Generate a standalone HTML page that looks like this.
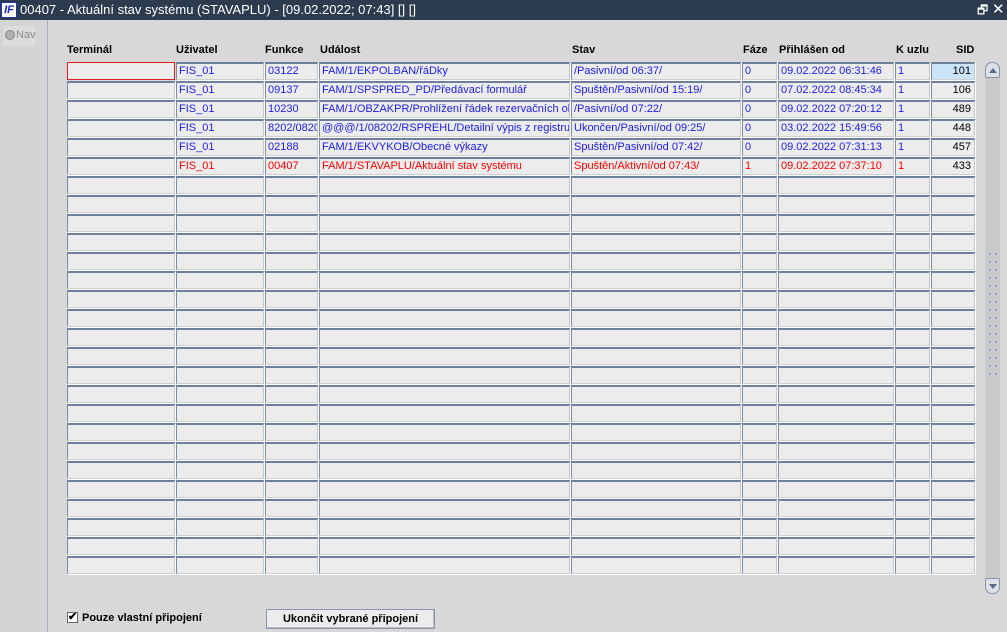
<!DOCTYPE html>
<html><head><meta charset="utf-8"><style>
*{box-sizing:border-box;margin:0;padding:0}
body{width:1007px;height:632px;overflow:hidden;background:#d8d8d8;font-family:"Liberation Sans",sans-serif;font-size:11px;position:relative}
.tb{position:absolute;left:0;top:0;width:1007px;height:20px;background:#2d3b4f;color:#fff;font-size:13px;line-height:20px}
.logo{position:absolute;left:1px;top:2px;width:16px;height:16px;background:#fff;border:1px solid #2233aa;color:#1122cc;font:bold italic 11px "Liberation Sans",sans-serif;line-height:14px;text-align:center}
.nav{position:absolute;left:0;top:20px;width:48px;height:612px;background:#d4d4d4;border-right:1px solid #a8b0bc}
.navb{position:absolute;left:3px;top:6px;width:32px;height:20px;background:#dcdcdc;color:#8a8a8a;font-size:11px;line-height:18px;padding-left:13px}
.navb:before{content:"";position:absolute;left:2px;top:4px;width:8px;height:8px;border-radius:50%;background:#b0b0b0;border:1px solid #888}
.h{position:absolute;top:44px;font-weight:bold;font-size:11px}
.grid{position:absolute;left:67px;top:62px}
.r{display:flex;height:19px}
.c{height:18px;margin-right:1px;background:#ececec;border:1px solid #7d8ba3;border-top:2px solid #6d7f9c;border-right-color:#c4c8cc;border-bottom-color:#d0d0d0;box-shadow:1px 1px 0 #fff;color:#1c1ce8;line-height:15px;padding-left:2px;white-space:nowrap;overflow:hidden}
.w1{width:108px}.w2{width:88px}.w3{width:53px}.w4{width:251px}.w5{width:170px}.w6{width:35px}.w7{width:116px}.w8{width:35px}.w9{width:44px;margin-right:0;text-align:right;padding-right:3px;color:#000}
.red .c{color:#f00}.red .w9{color:#000}
.sel{border:1px solid #e02020!important;box-shadow:none!important}
.sb{position:absolute;left:985px;top:62px;width:15px;height:532px;background:#cacaca;border-radius:7px}
</style></head><body>
<div class="tb"><div class="logo">IF</div><span style="position:absolute;left:20px">00407 - Aktuální stav systému (STAVAPLU) - [09.02.2022; 07:43] [] []</span><span style="position:absolute;left:977px;top:0;font-size:12px">🗗</span><span style="position:absolute;left:992px;font-size:15px">✕</span></div>
<div class="nav"><div class="navb">Nav</div></div>
<div class="h" style="left:67px">Terminál</div>
<div class="h" style="left:176px">Uživatel</div>
<div class="h" style="left:265px">Funkce</div>
<div class="h" style="left:320px">Událost</div>
<div class="h" style="left:572px">Stav</div>
<div class="h" style="left:743px">Fáze</div>
<div class="h" style="left:779px">Přihlášen od</div>
<div class="h" style="left:896px">K uzlu</div>
<div class="h" style="left:956px">SID</div>
<div class="grid">
<div class="r"><div class="c w1 sel"></div><div class="c w2">FIS_01</div><div class="c w3">03122</div><div class="c w4">FAM/1/EKPOLBAN/řáDky</div><div class="c w5">/Pasivní/od 06:37/</div><div class="c w6">0</div><div class="c w7">09.02.2022 06:31:46</div><div class="c w8">1</div><div class="c w9" style="background:#cce4fa">101</div></div>
<div class="r"><div class="c w1"></div><div class="c w2">FIS_01</div><div class="c w3">09137</div><div class="c w4">FAM/1/SPSPRED_PD/Předávací formulář</div><div class="c w5">Spuštěn/Pasivní/od 15:19/</div><div class="c w6">0</div><div class="c w7">07.02.2022 08:45:34</div><div class="c w8">1</div><div class="c w9">106</div></div>
<div class="r"><div class="c w1"></div><div class="c w2">FIS_01</div><div class="c w3">10230</div><div class="c w4">FAM/1/OBZAKPR/Prohlížení řádek rezervačních obj</div><div class="c w5">/Pasivní/od 07:22/</div><div class="c w6">0</div><div class="c w7">09.02.2022 07:20:12</div><div class="c w8">1</div><div class="c w9">489</div></div>
<div class="r"><div class="c w1"></div><div class="c w2">FIS_01</div><div class="c w3">8202/0820</div><div class="c w4">@@@/1/08202/RSPREHL/Detailní výpis z registru s</div><div class="c w5">Ukončen/Pasivní/od 09:25/</div><div class="c w6">0</div><div class="c w7">03.02.2022 15:49:56</div><div class="c w8">1</div><div class="c w9">448</div></div>
<div class="r"><div class="c w1"></div><div class="c w2">FIS_01</div><div class="c w3">02188</div><div class="c w4">FAM/1/EKVYKOB/Obecné výkazy</div><div class="c w5">Spuštěn/Pasivní/od 07:42/</div><div class="c w6">0</div><div class="c w7">09.02.2022 07:31:13</div><div class="c w8">1</div><div class="c w9">457</div></div>
<div class="r red"><div class="c w1"></div><div class="c w2">FIS_01</div><div class="c w3">00407</div><div class="c w4">FAM/1/STAVAPLU/Aktuální stav systému</div><div class="c w5">Spuštěn/Aktivní/od 07:43/</div><div class="c w6">1</div><div class="c w7">09.02.2022 07:37:10</div><div class="c w8">1</div><div class="c w9">433</div></div>
<div class="r"><div class="c w1"></div><div class="c w2"></div><div class="c w3"></div><div class="c w4"></div><div class="c w5"></div><div class="c w6"></div><div class="c w7"></div><div class="c w8"></div><div class="c w9"></div></div>
<div class="r"><div class="c w1"></div><div class="c w2"></div><div class="c w3"></div><div class="c w4"></div><div class="c w5"></div><div class="c w6"></div><div class="c w7"></div><div class="c w8"></div><div class="c w9"></div></div>
<div class="r"><div class="c w1"></div><div class="c w2"></div><div class="c w3"></div><div class="c w4"></div><div class="c w5"></div><div class="c w6"></div><div class="c w7"></div><div class="c w8"></div><div class="c w9"></div></div>
<div class="r"><div class="c w1"></div><div class="c w2"></div><div class="c w3"></div><div class="c w4"></div><div class="c w5"></div><div class="c w6"></div><div class="c w7"></div><div class="c w8"></div><div class="c w9"></div></div>
<div class="r"><div class="c w1"></div><div class="c w2"></div><div class="c w3"></div><div class="c w4"></div><div class="c w5"></div><div class="c w6"></div><div class="c w7"></div><div class="c w8"></div><div class="c w9"></div></div>
<div class="r"><div class="c w1"></div><div class="c w2"></div><div class="c w3"></div><div class="c w4"></div><div class="c w5"></div><div class="c w6"></div><div class="c w7"></div><div class="c w8"></div><div class="c w9"></div></div>
<div class="r"><div class="c w1"></div><div class="c w2"></div><div class="c w3"></div><div class="c w4"></div><div class="c w5"></div><div class="c w6"></div><div class="c w7"></div><div class="c w8"></div><div class="c w9"></div></div>
<div class="r"><div class="c w1"></div><div class="c w2"></div><div class="c w3"></div><div class="c w4"></div><div class="c w5"></div><div class="c w6"></div><div class="c w7"></div><div class="c w8"></div><div class="c w9"></div></div>
<div class="r"><div class="c w1"></div><div class="c w2"></div><div class="c w3"></div><div class="c w4"></div><div class="c w5"></div><div class="c w6"></div><div class="c w7"></div><div class="c w8"></div><div class="c w9"></div></div>
<div class="r"><div class="c w1"></div><div class="c w2"></div><div class="c w3"></div><div class="c w4"></div><div class="c w5"></div><div class="c w6"></div><div class="c w7"></div><div class="c w8"></div><div class="c w9"></div></div>
<div class="r"><div class="c w1"></div><div class="c w2"></div><div class="c w3"></div><div class="c w4"></div><div class="c w5"></div><div class="c w6"></div><div class="c w7"></div><div class="c w8"></div><div class="c w9"></div></div>
<div class="r"><div class="c w1"></div><div class="c w2"></div><div class="c w3"></div><div class="c w4"></div><div class="c w5"></div><div class="c w6"></div><div class="c w7"></div><div class="c w8"></div><div class="c w9"></div></div>
<div class="r"><div class="c w1"></div><div class="c w2"></div><div class="c w3"></div><div class="c w4"></div><div class="c w5"></div><div class="c w6"></div><div class="c w7"></div><div class="c w8"></div><div class="c w9"></div></div>
<div class="r"><div class="c w1"></div><div class="c w2"></div><div class="c w3"></div><div class="c w4"></div><div class="c w5"></div><div class="c w6"></div><div class="c w7"></div><div class="c w8"></div><div class="c w9"></div></div>
<div class="r"><div class="c w1"></div><div class="c w2"></div><div class="c w3"></div><div class="c w4"></div><div class="c w5"></div><div class="c w6"></div><div class="c w7"></div><div class="c w8"></div><div class="c w9"></div></div>
<div class="r"><div class="c w1"></div><div class="c w2"></div><div class="c w3"></div><div class="c w4"></div><div class="c w5"></div><div class="c w6"></div><div class="c w7"></div><div class="c w8"></div><div class="c w9"></div></div>
<div class="r"><div class="c w1"></div><div class="c w2"></div><div class="c w3"></div><div class="c w4"></div><div class="c w5"></div><div class="c w6"></div><div class="c w7"></div><div class="c w8"></div><div class="c w9"></div></div>
<div class="r"><div class="c w1"></div><div class="c w2"></div><div class="c w3"></div><div class="c w4"></div><div class="c w5"></div><div class="c w6"></div><div class="c w7"></div><div class="c w8"></div><div class="c w9"></div></div>
<div class="r"><div class="c w1"></div><div class="c w2"></div><div class="c w3"></div><div class="c w4"></div><div class="c w5"></div><div class="c w6"></div><div class="c w7"></div><div class="c w8"></div><div class="c w9"></div></div>
<div class="r"><div class="c w1"></div><div class="c w2"></div><div class="c w3"></div><div class="c w4"></div><div class="c w5"></div><div class="c w6"></div><div class="c w7"></div><div class="c w8"></div><div class="c w9"></div></div>
<div class="r"><div class="c w1"></div><div class="c w2"></div><div class="c w3"></div><div class="c w4"></div><div class="c w5"></div><div class="c w6"></div><div class="c w7"></div><div class="c w8"></div><div class="c w9"></div></div>
</div>
<div class="sb">
<div style="position:absolute;left:0;top:0;width:15px;height:16px;border:1px solid #8a96a8;border-radius:7px 7px 2px 2px;background:#dde2ea"><div style="position:absolute;left:3px;top:5px;border-left:4px solid transparent;border-right:4px solid transparent;border-bottom:5px solid #5a6c8a"></div></div>
<div style="position:absolute;left:0;bottom:0;width:15px;height:16px;border:1px solid #8a96a8;border-radius:2px 2px 7px 7px;background:#dde2ea"><div style="position:absolute;left:3px;top:5px;border-left:4px solid transparent;border-right:4px solid transparent;border-top:5px solid #5a6c8a"></div></div>
<div style="position:absolute;left:2px;top:188px;width:11px;height:130px;background-image:radial-gradient(circle,#8aa0c0 1px,transparent 1.3px);background-size:6px 8px"></div>
</div>
<div style="position:absolute;left:67px;top:612px;width:11px;height:11px;border:1px solid #666;background:#fff;font-size:11px;line-height:9px;text-align:center;font-weight:bold">✔</div>
<div style="position:absolute;left:82px;top:612px;font-weight:bold">Pouze vlastní připojení</div>
<div style="position:absolute;left:266px;top:609px;width:169px;height:20px;background:#ececec;border:1px solid #8a96a8;box-shadow:inset -1px -1px #bbb;text-align:center;font-weight:bold;line-height:18px">Ukončit vybrané připojení</div>
</body></html>
